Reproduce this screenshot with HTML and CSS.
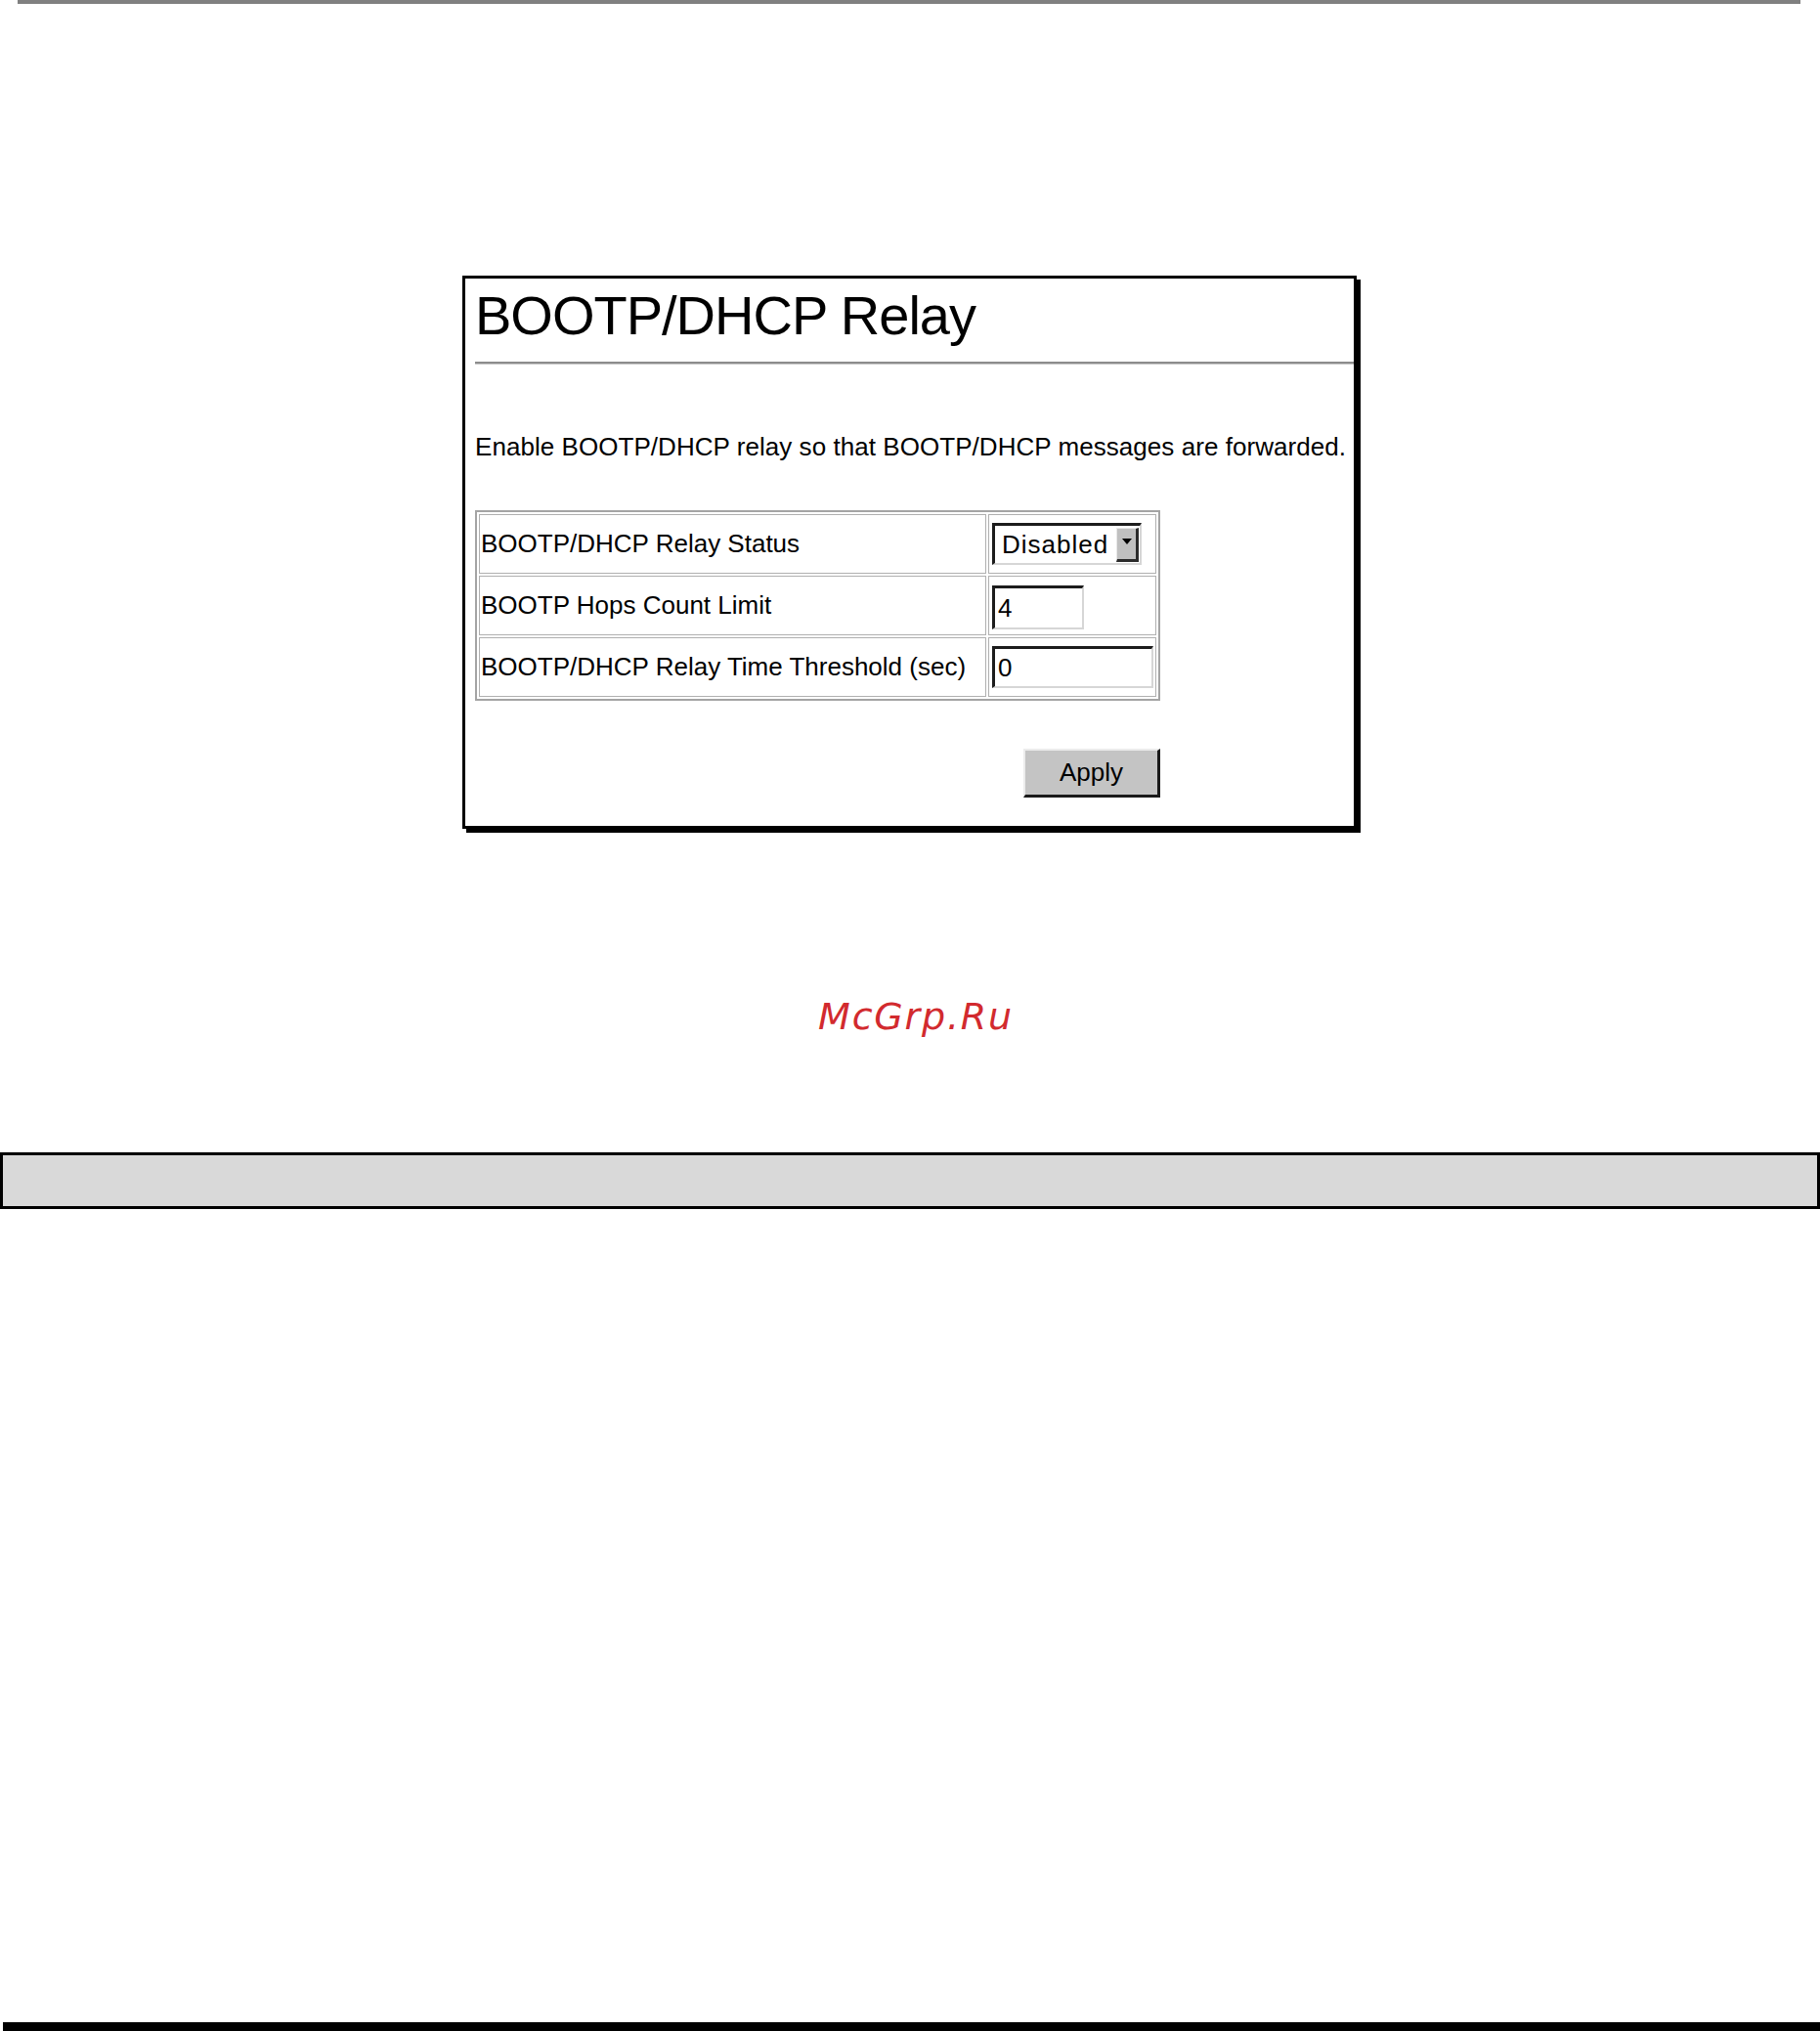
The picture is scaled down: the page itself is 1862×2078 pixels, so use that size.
FILE: index.html
```html
<!DOCTYPE html>
<html lang="en">
<head>
<meta charset="utf-8">
<title>BOOTP/DHCP Relay</title>
<link rel="stylesheet" href="styles.css">
</head>
<body>
<div class="top-rule"></div>
<div class="panel">
  <h1 class="title">BOOTP/DHCP Relay</h1>
  <div class="title-rule"></div>
  <p class="desc">Enable BOOTP/DHCP relay so that BOOTP/DHCP messages are forwarded.</p>
  <div class="form-wrap">
    <div class="grid">
      <div class="cell label">BOOTP/DHCP Relay Status</div>
      <div class="cell field">
        <div class="select">
          <span class="select-text">Disabled</span>
          <span class="select-btn"><span class="tri"></span></span>
        </div>
      </div>
      <div class="cell label">BOOTP Hops Count Limit</div>
      <div class="cell field"><input class="text-in short" type="text" value="4"></div>
      <div class="cell label">BOOTP/DHCP Relay Time Threshold (sec)</div>
      <div class="cell field"><input class="text-in long" type="text" value="0"></div>
    </div>
    <button class="apply" type="button">Apply</button>
  </div>
</div>
<div class="watermark">McGrp.Ru</div>
<div class="gray-bar"></div>
<div class="bottom-bar"></div>
</body>
</html>
```
FILE: styles.css
```css
html, body {
  margin: 0;
  padding: 0;
  background: #ffffff;
}
body {
  width: 1862px;
  height: 2078px;
  overflow: hidden;
  font-family: "Liberation Sans", Arial, sans-serif;
  color: #000;
}
.top-rule {
  height: 4px;
  margin-left: 18px;
  width: 1824px;
  background: #808080;
}
.panel {
  box-sizing: border-box;
  margin-top: 278px;
  margin-left: 473px;
  width: 915px;
  border: 3px solid #000;
  box-shadow: 4px 4px 0 #000;
  padding: 0 0 29px 10px;
}
.title {
  margin: 6px 0 0 0;
  font-weight: normal;
  font-size: 56px;
  line-height: 64px;
  letter-spacing: -1px;
  height: 64px;
}
.title-rule {
  margin-top: 15px;
  height: 0;
  border-top: 2px solid #8c8c8c;
  border-bottom: 1px solid #c8c8c8;
}
.desc {
  margin: 69px 0 0 0;
  font-size: 26px;
  line-height: 30px;
  letter-spacing: 0.05px;
  white-space: nowrap;
}
.form-wrap {
  margin-top: 50px;
  display: inline-flex;
  flex-direction: column;
  align-items: flex-end;
}
.grid {
  display: grid;
  grid-template-columns: 519px 172px;
  grid-auto-rows: 61px;
  gap: 2px;
  padding: 2px;
  border: 2px solid #a4a4a4;
}
.cell {
  box-sizing: border-box;
  border: 1px solid #b0b0b0;
  display: flex;
  align-items: center;
}
.label {
  padding-left: 1px;
  font-size: 26px;
  white-space: nowrap;
}
.field {
  padding-left: 3px;
}
.select {
  box-sizing: border-box;
  width: 153px;
  height: 43px;
  border-style: solid;
  border-width: 3px 2px 2px 3px;
  border-color: #1c1c1c #d6d6d6 #d6d6d6 #1c1c1c;
  display: flex;
  align-items: center;
  justify-content: space-between;
  padding: 0 1px 0 7px;
  background: #fff;
}
.select-text {
  font-size: 26px;
  line-height: 30px;
  letter-spacing: 1px;
}
.select-btn {
  box-sizing: border-box;
  width: 23px;
  height: 35px;
  background: #c0c0c0;
  border-style: solid;
  border-width: 1px 3px 3px 1px;
  border-color: #e8e8e8 #2a2a2a #2a2a2a #e8e8e8;
  display: flex;
  align-items: center;
  justify-content: center;
}
.tri {
  width: 0;
  height: 0;
  border-left: 5px solid transparent;
  border-right: 5px solid transparent;
  border-top: 6px solid #000;
  margin-bottom: 4px;
}
.text-in {
  box-sizing: border-box;
  margin: 0;
  border-style: solid;
  border-width: 3px 2px 2px 3px;
  border-color: #1c1c1c #d6d6d6 #d6d6d6 #1c1c1c;
  padding: 0 0 0 3px;
  font-family: "Liberation Sans", Arial, sans-serif;
  font-size: 26px;
  color: #000;
  background: #fff;
  outline: none;
}
.text-in.short {
  width: 94px;
  height: 45px;
  margin-top: 4px;
}
.text-in.long {
  width: 165px;
  height: 43px;
}
.apply {
  box-sizing: border-box;
  margin-top: 49px;
  width: 140px;
  height: 50px;
  background: #c4c4c4;
  border-style: solid;
  border-width: 2px 3px 3px 2px;
  border-color: #ececec #1a1a1a #1a1a1a #ececec;
  font-family: "Liberation Sans", Arial, sans-serif;
  font-size: 26px;
  color: #000;
  padding: 0;
}
.watermark {
  margin-top: 170px;
  text-align: center;
  font-family: "DejaVu Sans", Verdana, sans-serif;
  font-style: italic;
  font-size: 38px;
  line-height: 44px;
  letter-spacing: 1.8px;
  color: #d22a2e;
  padding-left: 12px;
}
.gray-bar {
  box-sizing: border-box;
  margin-top: 117px;
  height: 58px;
  width: 1862px;
  background: #d9d9d9;
  border: 3px solid #000;
}
.bottom-bar {
  margin-top: 832px;
  margin-left: 3px;
  height: 9px;
  background: #000;
}
```
